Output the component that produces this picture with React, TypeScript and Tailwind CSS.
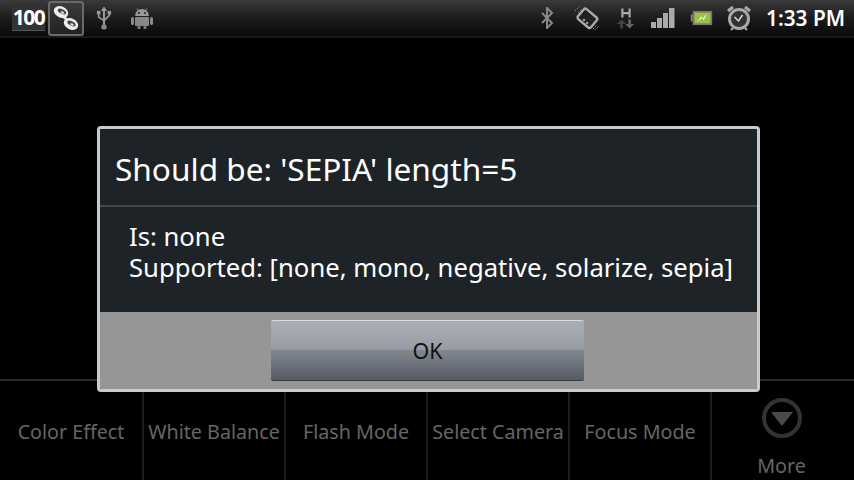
const font = { fontFamily: '"Noto Sans", "Open Sans", sans-serif' };

function Hundred() {
  return (
    <div className="w-[33px] h-[25px] bg-[#333333] border-b border-[#555] flex items-center justify-center text-white text-[21px] font-bold tracking-[-1.5px]">
      100
    </div>
  );
}

function Link() {
  return (
    <div className="w-[36px] h-[35px] rounded-[3px] border-[2px] border-[#6a6a6a] bg-gradient-to-b from-[#3c3c3c] to-[#222] flex items-center justify-center">
      <svg width="30" height="30" viewBox="0 0 30 30" fill="none">
        <path d="M12 13l5 5" stroke="#ddd" strokeWidth="3" />
        <ellipse cx="10" cy="9" rx="7.5" ry="5.5" fill="#eee" transform="rotate(25 10 9)" />
        <ellipse cx="11" cy="8.5" rx="4.5" ry="2.2" fill="#444" transform="rotate(25 11 8.5)" />
        <ellipse cx="11.5" cy="9.5" rx="2" ry="1" fill="#ddd" transform="rotate(25 11.5 9.5)" />
        <ellipse cx="20" cy="21" rx="7.5" ry="5.5" fill="#eee" transform="rotate(25 20 21)" />
        <ellipse cx="20.5" cy="20.5" rx="4.5" ry="2.2" fill="#444" transform="rotate(25 20.5 20.5)" />
        <ellipse cx="21" cy="21.5" rx="2" ry="1" fill="#ddd" transform="rotate(25 21 21.5)" />
      </svg>
    </div>
  );
}

function Usb() {
  return (
    <svg width="16" height="26" viewBox="0 0 18 28" fill="none">
      <path d="M9 1l3.5 5h-7z" fill="#999" />
      <path d="M9 5v19" stroke="#999" strokeWidth="2.4" />
      <path d="M3 8v5l6 4 6-6V8" stroke="#999" strokeWidth="1.8" />
      <rect x="1" y="6" width="4" height="4" fill="#999" />
      <rect x="13" y="6" width="4" height="4" fill="#999" />
      <circle cx="9" cy="24" r="3" fill="#888" />
    </svg>
  );
}

function Android() {
  return (
    <svg width="22" height="22" viewBox="0 0 22 22" fill="none">
      <path d="M4 9a7 7 0 0 1 14 0z" fill="#999" />
      <path d="M6 1.5l2 3M16 1.5l-2 3" stroke="#999" />
      <circle cx="8" cy="6" r="1" fill="#222" />
      <circle cx="14" cy="6" r="1" fill="#222" />
      <rect x="4" y="10" width="14" height="9" rx="1" fill="#888" />
      <rect x="0" y="10" width="3" height="8" rx="1.5" fill="#888" />
      <rect x="19" y="10" width="3" height="8" rx="1.5" fill="#888" />
      <rect x="6.5" y="18" width="3" height="4" fill="#777" />
      <rect x="12.5" y="18" width="3" height="4" fill="#777" />
    </svg>
  );
}

function Bluetooth() {
  return (
    <svg width="14" height="22" viewBox="0 0 14 22" fill="none">
      <path d="M2 6l10 10-5 5V1l5 5L2 16" stroke="#888" strokeWidth="2" />
    </svg>
  );
}

function Rotate() {
  return (
    <svg width="26" height="26" viewBox="0 0 26 26" fill="none">
      <rect x="5" y="6.5" width="17" height="13" rx="2" transform="rotate(40 13 13)" stroke="#aaa" strokeWidth="2.4" fill="#222" />
      <circle cx="10" cy="15" r="1.3" fill="#999" />
      <circle cx="13" cy="18" r="1.3" fill="#999" />
      <path d="M1 6l5-5M4 8l4-4M19 24l4-4M21 25l4-4" stroke="#888" strokeDasharray="1.5 1" />
    </svg>
  );
}

function Data() {
  return (
    <svg width="18" height="23" viewBox="0 0 20 24" fill="none">
      <path d="M6 1v10M14 1v10M6 6h8" stroke="#aaa" strokeWidth="2.4" />
      <path d="M5 13l-5 5h3.5v5h3v-5H10z" fill="#444" />
      <path d="M14 23l5-5h-3.5v-5h-3v5H9z" fill="#666" />
    </svg>
  );
}

function Signal() {
  return (
    <svg width="24" height="22" viewBox="0 0 24 22">
      <rect x="0" y="15" width="5" height="6" fill="#aaa" />
      <rect x="6" y="11" width="5" height="10" fill="#aaa" />
      <rect x="12" y="6" width="5" height="15" fill="#aaa" />
      <rect x="18" y="1" width="5.5" height="20" fill="#aaa" />
    </svg>
  );
}

function Battery() {
  return (
    <svg width="23" height="16" viewBox="0 0 24 18">
      <rect x="0" y="5" width="2" height="8" fill="#888" />
      <rect x="2" y="1" width="22" height="16" fill="#777" />
      <rect x="4" y="3" width="18" height="12" fill="#9dc23c" />
      <path d="M7 13l5-6 1 2.5 5-5-3.5 7-1.5-2.5z" fill="#eef" />
    </svg>
  );
}

function Alarm() {
  return (
    <svg width="24" height="26" viewBox="0 0 24 26" fill="none">
      <circle cx="12" cy="14" r="9.5" stroke="#aaa" strokeWidth="3" fill="#333" />
      <path d="M1 6l5-4M23 6l-5-4" stroke="#aaa" strokeWidth="3" />
      <path d="M7.5 12l4 4 4-6" stroke="#ddd" strokeWidth="1.4" />
      <path d="M6 23l-2 2M18 23l2 2" stroke="#aaa" strokeWidth="2" />
    </svg>
  );
}

function MenuItem({ label, first }: { label: string; first?: boolean }) {
  return (
    <div className={`${first ? "w-[144px]" : "w-[142px]"} h-full border-r-2 border-[#1c1c1c] flex items-center justify-center pt-[2px] text-[19.7px] text-[#666666] whitespace-nowrap`}>
      {label}
    </div>
  );
}

export default function App() {
  return (
    <div className="relative w-[854px] h-[480px] bg-black overflow-hidden flex flex-col" style={font}>
      <div className="h-[38px] shrink-0 bg-gradient-to-b from-[#3a3a3a] via-[#1c1c1c] to-[#0a0a0a] flex items-center pl-[12px] pr-[9px] border-b-2 border-[#181818]">
        <div className="flex items-center">
          <Hundred />
          <div className="ml-[3px]"><Link /></div>
          <div className="ml-[12px]"><Usb /></div>
          <div className="ml-[19px]"><Android /></div>
        </div>
        <div className="ml-auto flex items-center">
          <Bluetooth />
          <div className="ml-[20px]"><Rotate /></div>
          <div className="ml-[17px]"><Data /></div>
          <div className="ml-[16px]"><Signal /></div>
          <div className="ml-[15px]"><Battery /></div>
          <div className="ml-[14px]"><Alarm /></div>
          <div className="ml-[15px] text-white text-[20.8px] font-semibold leading-none">1:33 PM</div>
        </div>
      </div>
      <div className="flex-1" />
      <div className="h-[101px] shrink-0 border-t-2 border-[#2a2a2a] flex">
        <MenuItem label="Color Effect" first />
        <MenuItem label="White Balance" />
        <MenuItem label="Flash Mode" />
        <MenuItem label="Select Camera" />
        <MenuItem label="Focus Mode" />
        <div className="flex-1 h-full flex flex-col items-center text-[19.7px] text-[#666666] pt-[16px] pr-[3px]">
          <svg width="42" height="42" viewBox="0 0 42 42" fill="none">
            <circle cx="21" cy="21" r="18" stroke="#333" strokeWidth="4" />
            <path d="M10 15h22L21 29z" fill="#4a4a4a" />
          </svg>
          <div className="mt-[13px] leading-[28px]">More</div>
        </div>
      </div>

      <div className="absolute left-[97px] top-[126px] w-[663px] h-[266px] rounded-[4px] border-[3px] border-[#c6cbcc] overflow-hidden flex flex-col">
        <div className="h-[76px] bg-[#1d2327] flex items-center pl-[15px] pt-[4px] text-white text-[31.6px] whitespace-nowrap">
          Should be: 'SEPIA' length=5
        </div>
        <div className="h-[2px] bg-[#41474a]" />
        <div className="h-[105px] bg-[#1d2327] pl-[29px] pt-[14px] text-white text-[25.65px] leading-[31px] whitespace-nowrap">
          <div>Is: none</div>
          <div>Supported: [none, mono, negative, solarize, sepia]</div>
        </div>
        <div className="flex-1 bg-[#969696] flex justify-center pt-[8px] pr-[2px]">
          <div className="w-[313px] h-[61px] pt-[2px] rounded-[2px] border-t border-t-[#d8dce0] border-b border-b-[#33393f] bg-[linear-gradient(to_bottom,#a9aeb6_0%,#a0a5ad_30%,#969ba3_49%,#81868f_50%,#565c66_100%)] flex items-center justify-center text-[#111] text-[21.5px]">
            OK
          </div>
        </div>
      </div>
    </div>
  );
}
